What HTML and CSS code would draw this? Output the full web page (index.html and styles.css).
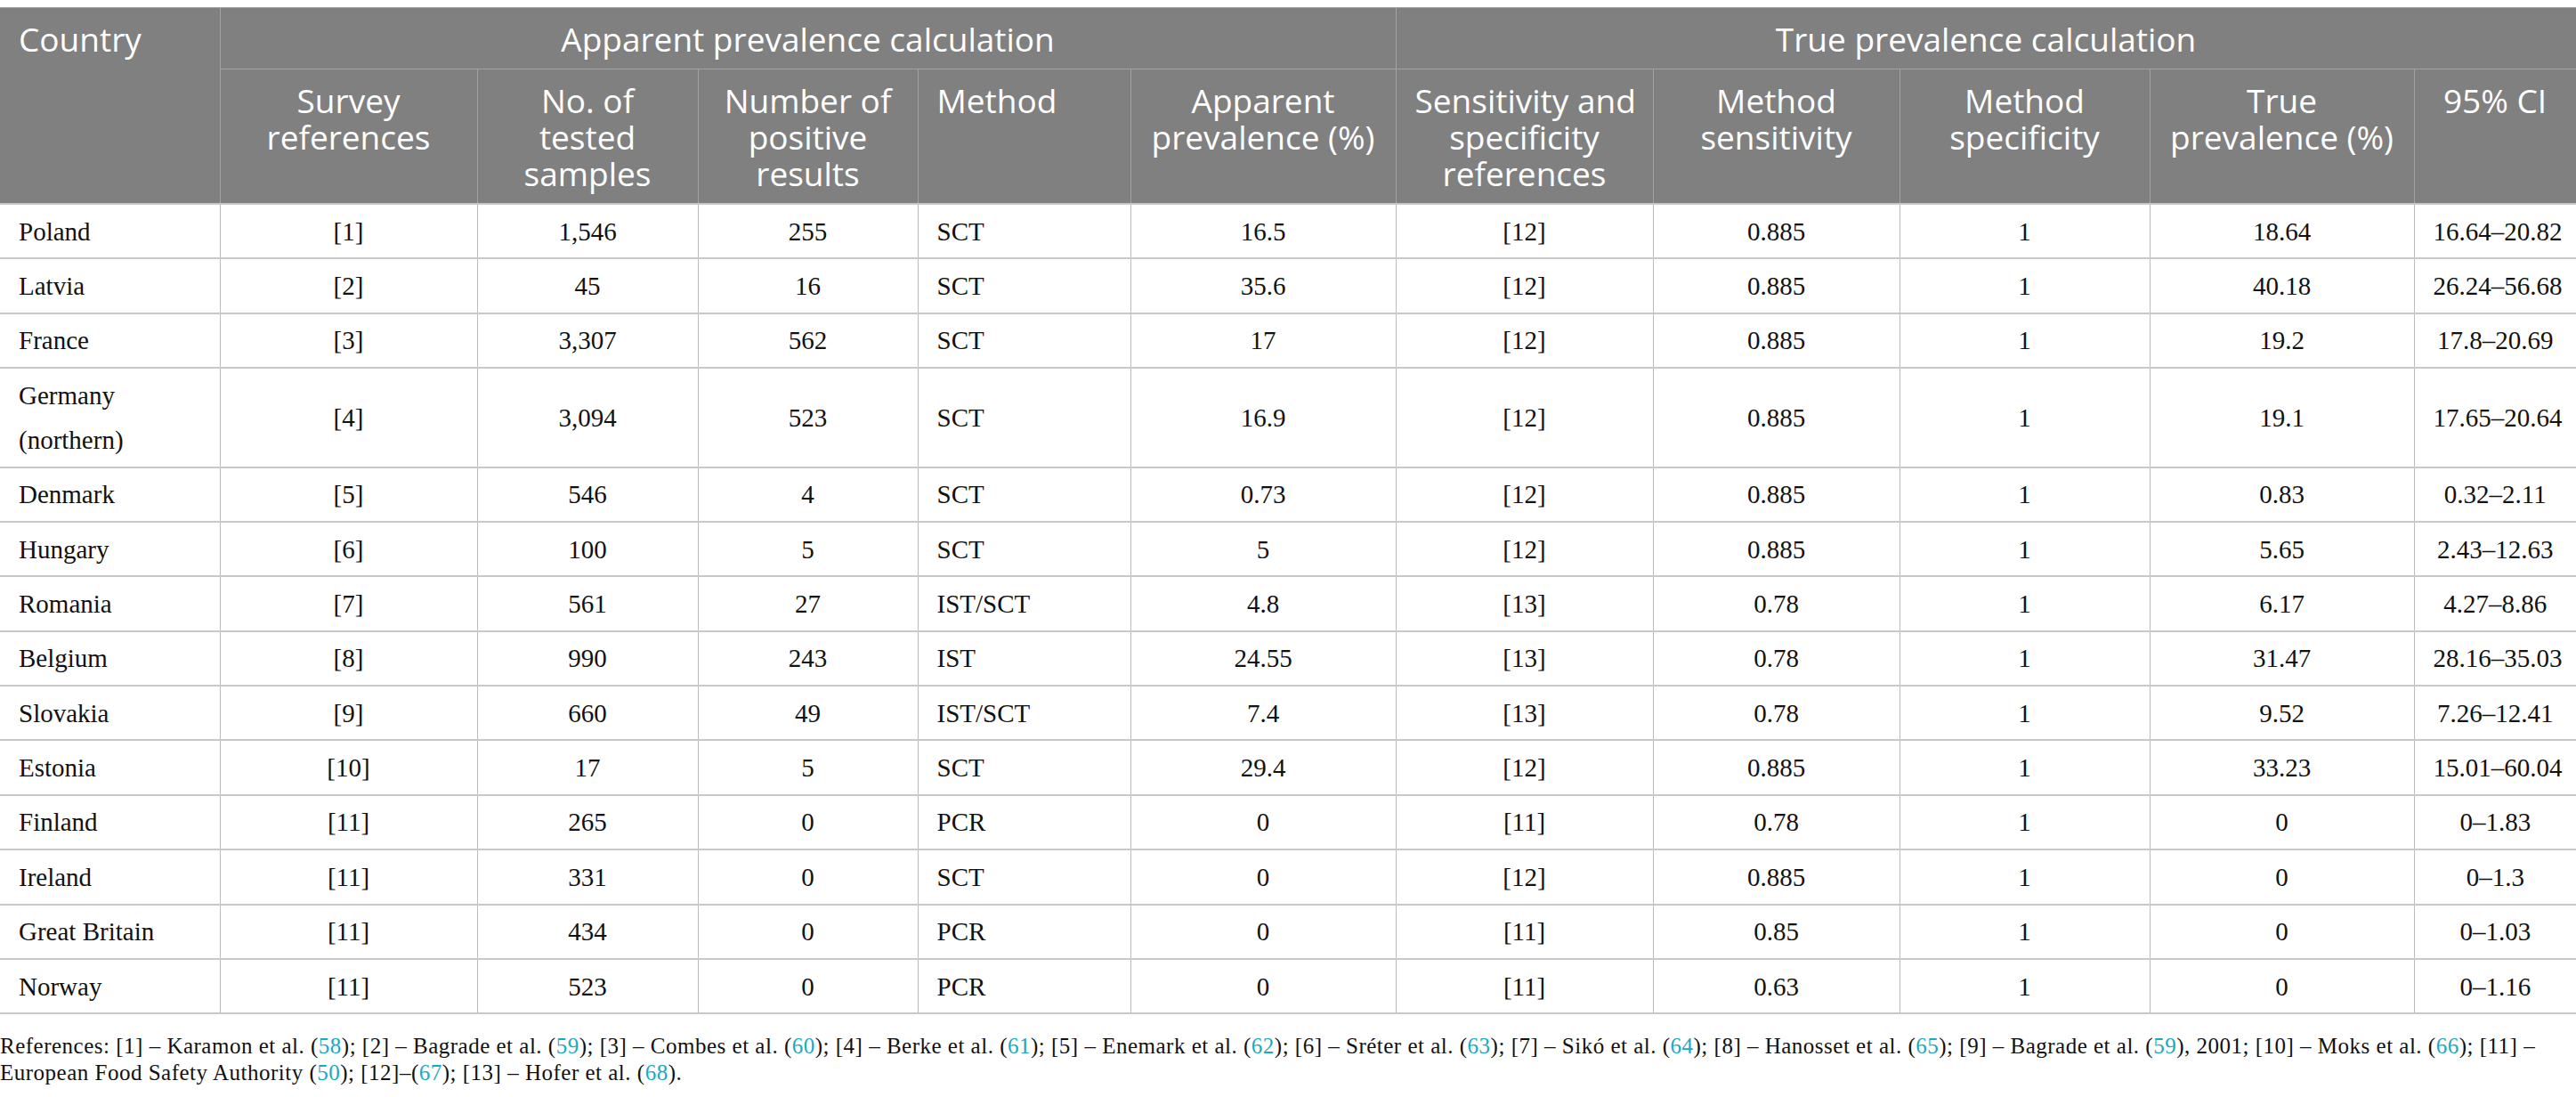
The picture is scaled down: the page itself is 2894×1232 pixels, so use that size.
FILE: index.html
```html
<!DOCTYPE html>
<html lang="en">
<head>
<meta charset="utf-8">
<title>Prevalence table</title>
<link rel="stylesheet" href="styles.css">
</head>
<body>
<div class="page">
<table class="prev">
  <colgroup>
    <col class="c1"><col class="c2"><col class="c3"><col class="c4"><col class="c5"><col class="c6"><col class="c7"><col class="c8"><col class="c9"><col class="c10"><col class="c11">
  </colgroup>
  <thead>
    <tr>
      <th rowspan="2" class="left">Country</th>
      <th colspan="5">Apparent prevalence calculation</th>
      <th colspan="5">True prevalence calculation</th>
    </tr>
    <tr>
      <th>Survey<br>references</th>
      <th>No. of<br>tested<br>samples</th>
      <th>Number of<br>positive<br>results</th>
      <th class="left">Method</th>
      <th>Apparent<br>prevalence (%)</th>
      <th>Sensitivity and<br>specificity<br>references</th>
      <th>Method<br>sensitivity</th>
      <th>Method<br>specificity</th>
      <th>True<br>prevalence (%)</th>
      <th>95% CI</th>
    </tr>
  </thead>
  <tbody>
    <tr><td class="left">Poland</td><td>[1]</td><td>1,546</td><td>255</td><td class="left">SCT</td><td>16.5</td><td>[12]</td><td>0.885</td><td>1</td><td>18.64</td><td>16.64–20.82</td></tr>
    <tr><td class="left">Latvia</td><td>[2]</td><td>45</td><td>16</td><td class="left">SCT</td><td>35.6</td><td>[12]</td><td>0.885</td><td>1</td><td>40.18</td><td>26.24–56.68</td></tr>
    <tr><td class="left">France</td><td>[3]</td><td>3,307</td><td>562</td><td class="left">SCT</td><td>17</td><td>[12]</td><td>0.885</td><td>1</td><td>19.2</td><td>17.8–20.69</td></tr>
    <tr><td class="left">Germany<br>(northern)</td><td>[4]</td><td>3,094</td><td>523</td><td class="left">SCT</td><td>16.9</td><td>[12]</td><td>0.885</td><td>1</td><td>19.1</td><td>17.65–20.64</td></tr>
    <tr><td class="left">Denmark</td><td>[5]</td><td>546</td><td>4</td><td class="left">SCT</td><td>0.73</td><td>[12]</td><td>0.885</td><td>1</td><td>0.83</td><td>0.32–2.11</td></tr>
    <tr><td class="left">Hungary</td><td>[6]</td><td>100</td><td>5</td><td class="left">SCT</td><td>5</td><td>[12]</td><td>0.885</td><td>1</td><td>5.65</td><td>2.43–12.63</td></tr>
    <tr><td class="left">Romania</td><td>[7]</td><td>561</td><td>27</td><td class="left">IST/SCT</td><td>4.8</td><td>[13]</td><td>0.78</td><td>1</td><td>6.17</td><td>4.27–8.86</td></tr>
    <tr><td class="left">Belgium</td><td>[8]</td><td>990</td><td>243</td><td class="left">IST</td><td>24.55</td><td>[13]</td><td>0.78</td><td>1</td><td>31.47</td><td>28.16–35.03</td></tr>
    <tr><td class="left">Slovakia</td><td>[9]</td><td>660</td><td>49</td><td class="left">IST/SCT</td><td>7.4</td><td>[13]</td><td>0.78</td><td>1</td><td>9.52</td><td>7.26–12.41</td></tr>
    <tr><td class="left">Estonia</td><td>[10]</td><td>17</td><td>5</td><td class="left">SCT</td><td>29.4</td><td>[12]</td><td>0.885</td><td>1</td><td>33.23</td><td>15.01–60.04</td></tr>
    <tr><td class="left">Finland</td><td>[11]</td><td>265</td><td>0</td><td class="left">PCR</td><td>0</td><td>[11]</td><td>0.78</td><td>1</td><td>0</td><td>0–1.83</td></tr>
    <tr><td class="left">Ireland</td><td>[11]</td><td>331</td><td>0</td><td class="left">SCT</td><td>0</td><td>[12]</td><td>0.885</td><td>1</td><td>0</td><td>0–1.3</td></tr>
    <tr><td class="left">Great Britain</td><td>[11]</td><td>434</td><td>0</td><td class="left">PCR</td><td>0</td><td>[11]</td><td>0.85</td><td>1</td><td>0</td><td>0–1.03</td></tr>
    <tr><td class="left">Norway</td><td>[11]</td><td>523</td><td>0</td><td class="left">PCR</td><td>0</td><td>[11]</td><td>0.63</td><td>1</td><td>0</td><td>0–1.16</td></tr>
  </tbody>
</table>
<p class="notes">References: [1] – Karamon et al. (<a>58</a>); [2] – Bagrade et al. (<a>59</a>); [3] – Combes et al. (<a>60</a>); [4] – Berke et al. (<a>61</a>); [5] – Enemark et al. (<a>62</a>); [6] – Sréter et al. (<a>63</a>); [7] – Sikó et al. (<a>64</a>); [8] – Hanosset et al. (<a>65</a>); [9] – Bagrade et al. (<a>59</a>), 2001; [10] – Moks et al. (<a>66</a>); [11] –<br>European Food Safety Authority (<a>50</a>); [12]–(<a>67</a>); [13] – Hofer et al. (<a>68</a>).</p>
</div>
</body>
</html>
```

FILE: styles.css
```css
html, body {
  margin: 0;
  padding: 0;
  background: #ffffff;
}

.page {
  padding-top: 8px;
  width: 2894px;
}

.prev {
  border-collapse: collapse;
  table-layout: fixed;
  width: 2894px;
  border-top: 1px solid #b4b4b4;
  border-bottom: 2px solid #b4b4b4;
}

.c1 { width: 247px; }
.c2 { width: 289px; }
.c3 { width: 248px; }
.c4 { width: 247px; }
.c5 { width: 239px; }
.c6 { width: 298px; }
.c7 { width: 289px; }
.c8 { width: 277px; }
.c9 { width: 281px; }
.c10 { width: 297px; }
.c11 { width: 182px; }

.prev th {
  background: #808080;
  color: #ffffff;
  font-family: "Open Sans", "Noto Sans", sans-serif;
  font-weight: 400;
  font-size: 37px;
  line-height: 41px;
  padding: 14px 21px 13px;
  text-align: center;
  vertical-align: top;
  white-space: nowrap;
  border: 1px solid #a3a3a3;
}

.prev td {
  font-family: "Liberation Serif", "Times New Roman", serif;
  font-size: 29px;
  line-height: 50px;
  color: #111111;
  padding: 4.7px 21px;
  text-align: center;
  vertical-align: middle;
  white-space: nowrap;
  border-left: 1px solid #bcbcbc;
  border-right: 1px solid #bcbcbc;
  border-top: 2px solid #c8c8c8;
  border-bottom: 2px solid #c8c8c8;
}

.prev th:first-child,
.prev td:first-child {
  border-left: none;
}

.prev td:last-child {
  border-right: none;
}

.prev .left {
  text-align: left;
}

.notes {
  margin: 21px 0 0;
  font-family: "Liberation Serif", "Times New Roman", serif;
  font-size: 25px;
  letter-spacing: 0.5px;
  line-height: 30px;
  color: #111111;
  white-space: nowrap;
}

.notes a {
  color: #19a9c1;
}
```
